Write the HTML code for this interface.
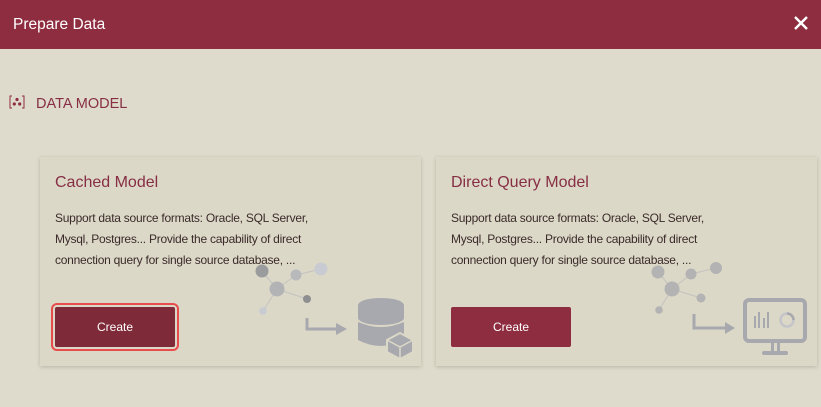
<!DOCTYPE html>
<html><head><meta charset="utf-8"><style>
*{margin:0;padding:0;box-sizing:border-box}
body{width:821px;height:407px;background:#dfdbcc;font-family:"Liberation Sans",sans-serif;position:relative;overflow:hidden}
.hdr{position:absolute;left:0;top:0;width:821px;height:49px;background:#8f2d40;color:#fff;font-size:15.5px;line-height:49px;padding-left:13px}
.x{position:absolute;right:10px;top:13px;width:20px;height:20px}
.dm{position:absolute;left:9px;top:95px;font-size:14.5px;color:#8f2d40}
.dm span{position:absolute;left:27px;top:1px;white-space:nowrap;color:#862e44}
.card{position:absolute;top:157px;width:381px;height:209px;background:#dcd8c7;box-shadow:0 1px 4px rgba(0,0,0,.18)}
.card h3{position:absolute;left:15px;top:17px;font-weight:normal;font-size:16px;color:#862e44}
.card p{position:absolute;left:15px;top:51px;white-space:nowrap;font-size:12px;letter-spacing:-0.25px;line-height:21px;color:#3a2a2a}
.btn{position:absolute;left:15px;top:150px;width:120px;height:40px;background:#8f2d40;color:#fff;font-size:12px;text-align:center;line-height:40px;border-radius:2px}
.sel{outline:2px solid #e84c4c;outline-offset:2px;background:#7e2a38}
</style></head><body>
<div class="hdr">Prepare Data
<svg class="x" viewBox="0 0 20 20"><path d="M4 4L16 16M16 4L4 16" stroke="#fff" stroke-width="2.4"/></svg></div>
<div class="dm"><svg width="16" height="14" viewBox="0 0 16 14" style="position:absolute;left:0;top:0"><path d="M3 1H1V13H3M13 1H15V13H13" stroke="#8f2d40" fill="none" stroke-width="1"/><circle cx="8" cy="4.5" r="1.6" fill="#8f2d40"/><circle cx="5.3" cy="9" r="1.6" fill="#8f2d40"/><circle cx="10.7" cy="9" r="1.6" fill="#8f2d40"/></svg><span>DATA MODEL</span></div>

<div class="card" style="left:40px">
<h3>Cached Model</h3>
<p>Support data source formats: Oracle, SQL Server,<br>Mysql, Postgres... Provide the capability of direct<br>connection query for single source database, ...</p>
<div class="btn sel">Create</div>
<svg style="position:absolute;left:200px;top:93px" width="181" height="116" viewBox="240 250 181 116">
<g stroke="#c2c2c0" stroke-width="1"><line x1="262" y1="271" x2="277" y2="289"/><line x1="277" y1="289" x2="296" y2="275"/><line x1="296" y1="275" x2="321" y2="269"/><line x1="277" y1="289" x2="307" y2="299"/><line x1="277" y1="289" x2="263" y2="311"/></g>
<circle cx="262" cy="271" r="6.5" fill="#9a9b9d"/><circle cx="296" cy="275" r="5.5" fill="#b8b9bb"/><circle cx="321" cy="269" r="6.5" fill="#c8cbd2"/><circle cx="277" cy="289" r="7.5" fill="#b2b3b5"/><circle cx="307" cy="299" r="4" fill="#8e8f91"/><circle cx="263" cy="311" r="3.8" fill="#c8cbd2"/>
<path d="M307 318V329H337" stroke="#a8a9ae" stroke-width="3" fill="none"/><path d="M336 323L347 329L336 335Z" fill="#a8a9ae"/>
<ellipse cx="381" cy="305" rx="23" ry="7" fill="#a8a9ae"/><rect x="358" y="305" width="46" height="13" fill="#a8a9ae"/><ellipse cx="381" cy="318" rx="23" ry="7" fill="#a8a9ae"/>
<path d="M358 322Q381 332 404 322V340Q381 352 358 340Z" fill="#a8a9ae"/>
<path d="M387 340L400 333L413 340V352L400 359L387 352Z" fill="#a8a9ae" stroke="#dcd8c7" stroke-width="2"/><path d="M387 340L400 347L413 340M400 347V359" stroke="#dcd8c7" stroke-width="1.5" fill="none"/>
</svg>
</div>

<div class="card" style="left:436px">
<h3>Direct Query Model</h3>
<p>Support data source formats: Oracle, SQL Server,<br>Mysql, Postgres... Provide the capability of direct<br>connection query for single source database, ...</p>
<div class="btn">Create</div>
<svg style="position:absolute;left:204px;top:93px" width="177" height="116" viewBox="640 250 177 116">
<g stroke="#c2c2c0" stroke-width="1"><line x1="658" y1="272" x2="672" y2="289"/><line x1="672" y1="289" x2="691" y2="274"/><line x1="691" y1="274" x2="716" y2="268"/><line x1="672" y1="289" x2="701" y2="298"/><line x1="672" y1="289" x2="659" y2="310"/></g>
<circle cx="658" cy="272" r="6.5" fill="#b3b3b3"/><circle cx="691" cy="274" r="5.5" fill="#b3b3b3"/><circle cx="716" cy="268" r="6" fill="#b3b3b3"/><circle cx="672" cy="289" r="7.5" fill="#b3b3b3"/><circle cx="701" cy="298" r="4.5" fill="#b3b3b3"/><circle cx="659" cy="310" r="3.8" fill="#b3b3b3"/>
<path d="M694 314V328H726" stroke="#a8a9ae" stroke-width="3" fill="none"/><path d="M725 322L735 328L725 334Z" fill="#a8a9ae"/>
<rect x="745" y="300" width="60" height="41" rx="4" fill="none" stroke="#a8a9ae" stroke-width="4"/>
<rect x="771" y="341" width="3" height="10" fill="#a8a9ae"/><rect x="777" y="341" width="3" height="10" fill="#a8a9ae"/><rect x="762" y="351" width="26" height="4" rx="2" fill="#a8a9ae"/>
<g fill="#a8a9ae"><rect x="754" y="316" width="2" height="12"/><rect x="758" y="312" width="2" height="16"/><rect x="763" y="318" width="2" height="10"/><rect x="767" y="312" width="2" height="16"/></g>
<circle cx="787" cy="320" r="6.5" fill="none" stroke="#c4c5c9" stroke-width="2.5"/><path d="M787 313.5A6.5 6.5 0 0 1 793.5 320" stroke="#a8a9ae" stroke-width="2.5" fill="none"/>
</svg>
</div>
</body></html>
